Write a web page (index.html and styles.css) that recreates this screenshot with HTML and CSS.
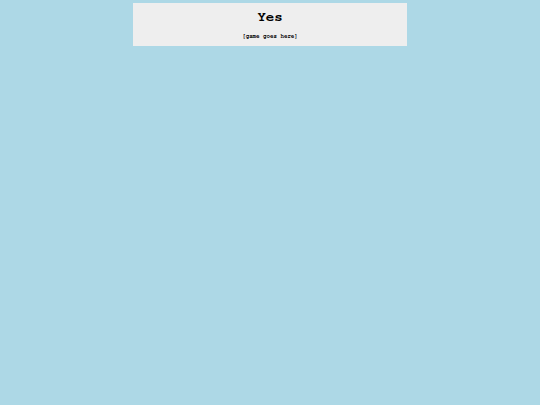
FILE: index.html
```html
<!DOCTYPE html>
<html>
<head>
<link rel="stylesheet" href="styles.css">
</head>
<body>

<div class="panel">
    <h1 class="title">Yes</h1>
    <p class="game">[game goes here]</p>
</div>

</body>
</html>
```

FILE: styles.css
```css
body {
    margin: 0;
    background-color: lightblue;
    font-family: FreeMono, "Courier New", monospace;
    color: #000;
}

.panel {
    width: 274px;
    margin: 3px auto 0;
    padding: 7px 0 6px;
    background-color: #eee;
    text-align: center;
}

.title {
    margin: 0;
    font-size: 14px;
    line-height: 15px;
    font-weight: bold;
}

.game {
    margin: 8px 0 0;
    font-size: 5.8px;
    line-height: 7px;
    font-weight: bold;
}
```
